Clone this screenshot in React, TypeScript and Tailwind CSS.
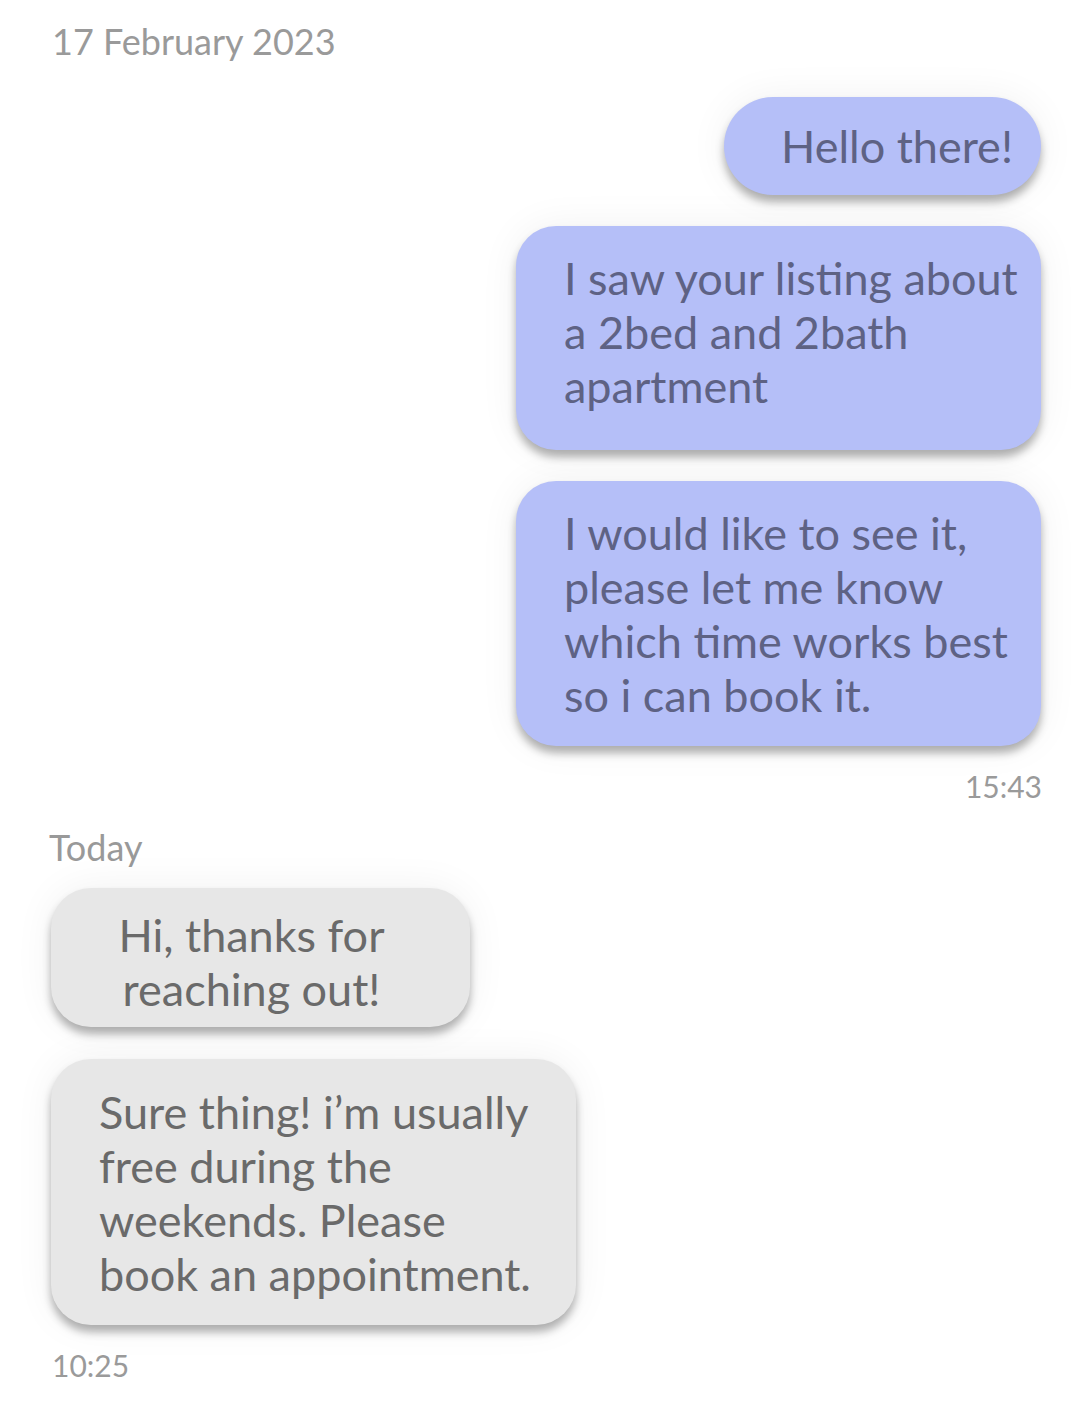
const sent = [
  { text: "Hello there!", cls: "w-[317px] h-[98px] rounded-full items-center justify-end pr-7" },
  {
    text: "I saw your listing about a 2bed and 2bath apartment",
    cls: "w-[525px] h-[224px] rounded-[40px] items-start pl-12 pr-5 pt-[25px]",
  },
  {
    text: "I would like to see it, please let me know which time works best so i can book it.",
    cls: "w-[525px] h-[265px] rounded-[40px] items-start pl-12 pr-5 pt-[25px]",
  },
];

const received = [
  {
    text: "Hi, thanks for reaching out!",
    cls: "w-[419px] h-[139px] rounded-[40px] items-start justify-center text-center pl-[24px] pr-[42px] pt-[20px]",
  },
  {
    text: "Sure thing! i’m usually free during the weekends. Please book an appointment.",
    cls: "w-[525px] h-[266px] rounded-[40px] items-start pl-12 pr-5 pt-[26px]",
  },
];

const bubbleShadow =
  "shadow-[0_7px_8px_rgba(0,0,0,0.3),0_0_40px_rgba(0,0,0,0.06)]";

export default function App() {
  return (
    <main className="min-h-[1410px] w-[1080px] bg-white font-['Lato',sans-serif]">
      <div className="px-[52px] pt-[20px]">
        <p className="text-[36px] leading-[42px] text-[#9a9a9a]">17 February 2023</p>
      </div>

      {/* Sent messages */}
      <section className="flex flex-col items-end gap-[31px] pr-[39px] pt-[35px]">
        {sent.map((m) => (
          <div
            key={m.text}
            className={`flex bg-[#b5bff8] text-[#5e6284] text-[45px] leading-[54px] ${bubbleShadow} ${m.cls}`}
          >
            <p>{m.text}</p>
          </div>
        ))}
      </section>
      <p className="pr-[38px] pt-[22px] text-right text-[30px] leading-[36px] text-[#9a9a9a]">15:43</p>

      <p className="pl-[49px] pt-[22px] text-[36px] leading-[42px] text-[#999999]">Today</p>

      {/* Received messages */}
      <section className="flex flex-col items-start gap-[32px] pl-[51px] pt-[20px]">
        {received.map((m) => (
          <div
            key={m.text}
            className={`flex bg-[#e7e7e7] text-[#6a6a6a] text-[45px] leading-[54px] ${bubbleShadow} ${m.cls}`}
          >
            <p>{m.text}</p>
          </div>
        ))}
      </section>
      <p className="pl-[52px] pt-[22px] text-[30px] leading-[36px] text-[#9a9a9a]">10:25</p>
    </main>
  );
}
